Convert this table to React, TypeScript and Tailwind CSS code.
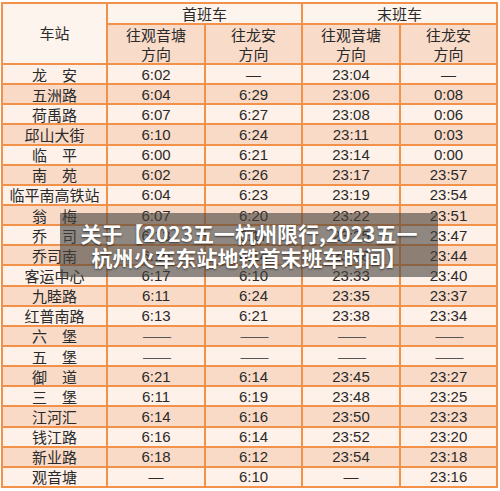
import React from 'react'

type Row = [string, string, string, string, string]

const ROWS: Row[] = [
    ['龙\u3000安', '6:02', '—', '23:04', '—'],
    ['五洲路', '6:04', '6:29', '23:06', '0:08'],
    ['荷禹路', '6:07', '6:27', '23:08', '0:06'],
    ['邱山大街', '6:10', '6:24', '23:11', '0:03'],
    ['临\u3000平', '6:00', '6:21', '23:14', '0:00'],
    ['南\u3000苑', '6:02', '6:26', '23:17', '23:57'],
    ['临平南高铁站', '6:04', '6:23', '23:19', '23:54'],
    ['翁\u3000梅', '6:07', '6:20', '23:22', '23:51'],
    ['乔\u3000司', '6:13', '6:17', '23:25', '23:47'],
    ['乔司南', '6:15', '6:14', '23:28', '23:44'],
    ['客运中心', '6:17', '6:10', '23:33', '23:40'],
    ['九睦路', '6:11', '6:24', '23:35', '23:37'],
    ['红普南路', '6:13', '6:21', '23:38', '23:34'],
    ['六\u3000堡', '——', '——', '——', '——'],
    ['五\u3000堡', '——', '——', '——', '——'],
    ['御\u3000道', '6:21', '6:14', '23:45', '23:27'],
    ['三\u3000堡', '6:11', '6:19', '23:48', '23:25'],
    ['江河汇', '6:14', '6:16', '23:50', '23:23'],
    ['钱江路', '6:16', '6:14', '23:52', '23:20'],
    ['新业路', '6:18', '6:12', '23:54', '23:18'],
    ['观音塘', '—', '6:10', '—', '23:16'],
]

const cjk = "font-['Noto_Sans_CJK_SC',sans-serif]"
const num = "font-['Liberation_Sans','Noto_Sans_CJK_SC',sans-serif]"

export default function App() {
    return (
        <div className="relative w-[500px] h-[491px] bg-white overflow-hidden">
            {/* timetable */}
            <div className="ml-[1px] mt-[2px] w-[497px] h-[486px] bg-[#f2914a] p-[2px] grid gap-[2px] grid-cols-[103px_96px_95px_96px_95px] grid-rows-[19px_38px_repeat(21,minmax(0,1fr))] text-[#2a2a2a]">
                <div className={`row-span-2 bg-[#fdf4ee] flex items-center justify-center text-[15px] ${cjk}`}>车站</div>
                <div className={`col-span-2 bg-[#fdf4ee] flex items-center justify-center text-[15px] leading-none ${cjk}`}>首班车</div>
                <div className={`col-span-2 bg-[#fdf4ee] flex items-center justify-center text-[15px] leading-none ${cjk}`}>末班车</div>
                {['往观音塘', '往龙安', '往观音塘', '往龙安'].map((t, i) => (
                    <div key={i} className={`bg-[#f9dbc9] flex flex-col items-center justify-center text-[15px] leading-[19px] ${cjk}`}>
                        <span>{t}</span>
                        <span>方向</span>
                    </div>
                ))}
                {ROWS.map((row, r) => {
                    const bg = r % 2 === 0 ? 'bg-[#fdf1e9]' : 'bg-[#f9dac7]'
                    return row.map((cell, c) => (
                        <div
                            key={`${r}-${c}`}
                            className={`${bg} flex items-center justify-center leading-none ${c === 0 ? `text-[15px] ${cjk}` : `text-[15px] ${num}`} ${cell === '——' ? 'tracking-[-2px] text-[#555]' : ''}`}
                        >
                            {cell}
                        </div>
                    ))
                })}
            </div>

            {/* caption overlay */}
            <div className="absolute left-[60px] top-[213px] w-[378px] h-[64px] bg-[rgba(70,66,62,0.6)] flex flex-col items-center justify-center">
                <p className={`text-white font-bold text-[21px] leading-[24px] whitespace-nowrap [text-shadow:0_1px_2px_rgba(0,0,0,0.6)] ${cjk}`}>
                    关于【2023五一杭州限行,2023五一
                </p>
                <p className={`text-white font-bold text-[21px] leading-[24px] whitespace-nowrap [text-shadow:0_1px_2px_rgba(0,0,0,0.6)] ${cjk}`}>
                    杭州火车东站地铁首末班车时间】
                </p>
            </div>
        </div>
    )
}
